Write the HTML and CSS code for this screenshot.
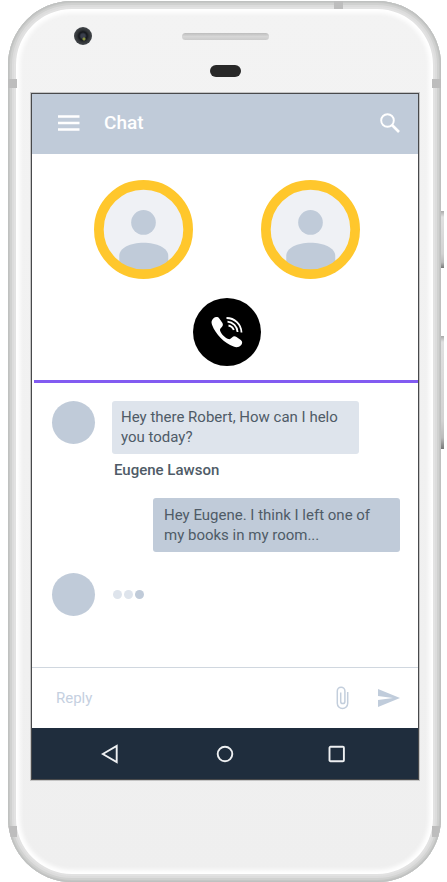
FILE: index.html
```html
<!DOCTYPE html>
<html lang="en">
<head>
<meta charset="utf-8">
<meta name="viewport" content="width=device-width, initial-scale=1">
<title>Chat</title>
<link rel="stylesheet" href="styles.css">
</head>
<body>
<div class="phone">
  <span class="side-key side-key-power"></span>
  <span class="side-key side-key-volume"></span>
  <div class="shell">
    <span class="band band-top"></span>
    <span class="band band-left-upper"></span>
    <span class="band band-right-upper"></span>
    <span class="band band-left-lower"></span>
    <span class="band band-right-lower"></span>
    <div class="forehead">
      <span class="camera"></span>
      <span class="speaker"></span>
      <span class="sensor"></span>
    </div>
    <div class="screen">
      <header class="app-bar">
        <button class="icon-button" aria-label="Menu">
          <svg width="22" height="16" viewBox="0 0 22 16"><path d="M0 1.5h21.500M0 8h21.500M0 14.5h21.500" stroke="#fff" stroke-width="2.4"/></svg>
        </button>
        <h1 class="title">Chat</h1>
        <button class="icon-button" aria-label="Search">
          <svg width="20" height="20" viewBox="0 0 20 20" fill="none" stroke="#fff"><circle cx="7.5" cy="7.5" r="6.3" stroke-width="1.9"/><path d="M12 12l7 7" stroke-width="2.6"/></svg>
        </button>
      </header>
      <section class="call">
        <div class="callers">
          <svg class="caller" viewBox="0 0 98 98" role="img" aria-label="Caller">
            <circle cx="49" cy="49" r="44" fill="#eff1f5"/>
            <circle cx="49" cy="42" r="12.2" fill="#c0cbd9"/>
            <path d="M25 92V75C25 67 36 62 49 62S73.500 67 73.500 75V92Z" fill="#c0cbd9"/>
            <circle cx="49" cy="49" r="44.200" fill="none" stroke="#ffc72c" stroke-width="9.600"/>
          </svg>
          <svg class="caller" viewBox="0 0 98 98" role="img" aria-label="Recipient">
            <circle cx="49" cy="49" r="44" fill="#eff1f5"/>
            <circle cx="49" cy="42" r="12.2" fill="#c0cbd9"/>
            <path d="M25 92V75C25 67 36 62 49 62S73.500 67 73.500 75V92Z" fill="#c0cbd9"/>
            <circle cx="49" cy="49" r="44.200" fill="none" stroke="#ffc72c" stroke-width="9.600"/>
          </svg>
        </div>
        <button class="call-button" aria-label="Call">
          <svg width="68" height="68" viewBox="0 0 68 68">
            <path d="M20.500 20.300C22.200 18.700 25 18.600 26.300 20.500L29.300 24.800C30.400 26.500 29.900 28 28.600 29.200C27.200 30.400 26.700 31.500 27.200 33C28.500 36.300 32 39.800 35.300 41C36.900 41.500 38 40.700 39 39.600C40.200 38.300 41.800 37.900 43.500 39L47.800 41.900C49.700 43.200 49.500 45.500 48 47.200C46.200 49.200 43.500 49.600 40.600 48.600C31.200 45.200 22.800 36.700 19 26.800C18 24.100 18.500 22.100 20.500 20.300Z" fill="#fff"/>
            <path d="M33.500 20A15 15 0 0 1 48.500 34.500M34.500 23.700A11 11 0 0 1 44.600 34M35.500 27.500A7 7 0 0 1 40.800 32" fill="none" stroke="#fff" stroke-width="1.800"/>
          </svg>
        </button>
      </section>
      <main class="messages">
        <div class="row">
          <span class="avatar"></span>
          <div class="incoming">
            <p class="bubble">Hey there Robert, How can I helo you today?</p>
            <p class="sender">Eugene Lawson</p>
          </div>
        </div>
        <p class="bubble bubble-own">Hey Eugene. I think I left one of my books in my room...</p>
        <div class="row row-typing">
          <span class="avatar"></span>
          <span class="typing"><i></i><i></i><i></i></span>
        </div>
      </main>
      <form class="composer">
        <input class="reply" type="text" placeholder="Reply" aria-label="Reply">
        <button class="icon-button" type="button" aria-label="Attach file">
          <svg width="14" height="24" viewBox="0 0 14 24" fill="none" stroke="#c3cedc" stroke-width="1.500"><path d="M11.700 6V17.300A5.200 5.200 0 0 1 1.300 17.300V5A3.800 3.800 0 0 1 8.900 5V15.500A2.100 2.100 0 0 1 4.700 15.500V6.500"/></svg>
        </button>
        <button class="icon-button" type="button" aria-label="Send">
          <svg width="22" height="18" viewBox="0 0 22 18"><path d="M0 0L22 9 0 18V11L15 9 0 7Z" fill="#c0ccdb"/></svg>
        </button>
      </form>
      <nav class="system-bar">
        <button class="icon-button" aria-label="Back">
          <svg width="20" height="20" viewBox="0 0 20 20"><path d="M1.800 10L15.700 2V18Z" fill="none" stroke="#eef0f2" stroke-width="1.900"/></svg>
        </button>
        <button class="icon-button" aria-label="Home">
          <svg width="18" height="18" viewBox="0 0 18 18"><circle cx="9" cy="9" r="7.300" fill="none" stroke="#eef0f2" stroke-width="1.900"/></svg>
        </button>
        <button class="icon-button" aria-label="Recent apps">
          <svg width="18" height="18" viewBox="0 0 18 18"><rect x="1.500" y="1.800" width="14.400" height="14.400" rx="1" fill="none" stroke="#eef0f2" stroke-width="1.900"/></svg>
        </button>
      </nav>
    </div>
  </div>
</div>
</body>
</html>
```
FILE: styles.css
```css
* {
  box-sizing: border-box;
}

body {
  margin: 0;
  min-height: 100vh;
  display: flex;
  padding: 1px 6px 0 8px;
  background: #fff;
  color: #4f5b67;
  font: 15px/20px Roboto, sans-serif;
}

h1,
p {
  margin: 0;
}

button {
  border: 0;
  padding: 0;
  background: none;
  cursor: pointer;
}

svg {
  display: block;
}

.phone {
  position: relative;
  flex: 1;
  display: flex;
}

.shell {
  position: relative;
  flex: 1;
  padding: 0 22px 102px 23px;
  border-radius: 64px;
  overflow: hidden;
  background: linear-gradient(#f3f3f3, #efefef);
  box-shadow:
    inset 0 0 0 1px #bfc1c0,
    inset 0 0 0 2px #c6c7c6,
    inset 0 0 0 4px #d0d1d0,
    inset 0 0 0 6px #dcdcdc,
    inset 0 0 0 8px #e2e2e2,
    inset 0 0 4px 12px #fff;
}

.side-key {
  position: absolute;
  right: -3px;
  width: 3px;
  background: linear-gradient(#aaa, #e0e0e0 6px, #d2d2d2 75%, #bbb 90%, #777);
}

.side-key-power {
  top: 210px;
  height: 57px;
}

.side-key-volume {
  top: 335px;
  height: 113px;
}

.band {
  position: absolute;
  width: 9px;
  height: 9px;
  background: #bdbdbd;
}

.band-top {
  top: 0;
  right: 98px;
  height: 8px;
}

.band-left-upper {
  top: 78px;
  left: 0;
}

.band-right-upper {
  top: 78px;
  right: 0;
}

.band-left-lower {
  bottom: 45px;
  left: 0;
  height: 11px;
}

.band-right-lower {
  bottom: 45px;
  right: 0;
  height: 11px;
}

.forehead {
  height: 92px;
  padding: 26px 42px 0 43px;
  display: grid;
  grid-template-columns: 1fr auto 1fr;
  grid-template-rows: 18px 12px;
  row-gap: 20px;
  align-items: center;
}

.camera {
  width: 18px;
  height: 18px;
  border-radius: 50%;
  background:
    radial-gradient(circle at 10px 12px, #8a9440 0 1px, transparent 2px),
    radial-gradient(circle, #3a3f4c 0 2px, #14171c 4px, #303336 6px, #42464a 9px);
}

.speaker {
  width: 87px;
  height: 7px;
  border-radius: 4px;
  background: linear-gradient(#bcbcbc, #d6d6d6 50%, #cbcbcb);
}

.sensor {
  grid-column: 2;
  justify-self: center;
  width: 31px;
  height: 12px;
  border-radius: 6px;
  background: #282828;
}

.screen {
  border: 1px solid #48494b;
  box-shadow: 0 0 0 1px #c4c4c4;
  background: #fff;
}

.app-bar {
  height: 60px;
  padding: 0 18px 2px 26px;
  display: flex;
  align-items: center;
  background: #c0cbd9;
}

.title {
  flex: 1;
  margin-left: 24px;
  color: #fff;
  font-size: 19px;
  line-height: 24px;
  font-weight: 500;
}

.call {
  margin-left: 2px;
  padding: 26px 0 14px 2px;
  border-bottom: 3px solid #825bf1;
}

.callers {
  display: flex;
  justify-content: center;
  gap: 68px;
}

.caller {
  width: 99px;
  height: 99px;
}

.call-button {
  display: block;
  width: 68px;
  margin: 19px auto 0;
  border-radius: 50%;
  background: #000;
}

.messages {
  padding: 18px 18px 51px 20px;
}

.row {
  display: flex;
  gap: 17px;
}

.avatar {
  width: 43px;
  height: 43px;
  border-radius: 50%;
  background: #c0cbd9;
}

.bubble {
  width: 247px;
  padding: 6px 9px 7px;
  border-radius: 3px;
  background: #dee4ec;
}

.bubble-own {
  margin: 18px 0 21px auto;
  padding: 7px 11px;
  background: #c0cbd9;
}

.sender {
  margin: 6px 2px 0;
  font-weight: 500;
}

.row-typing {
  align-items: center;
}

.typing {
  display: flex;
  gap: 2px;
  padding-left: 1px;
}

.typing i {
  width: 9px;
  height: 9px;
  border-radius: 50%;
  background: #dee4ec;
}

.typing i:last-child {
  background: #c0cbd9;
}

.composer {
  height: 61px;
  padding: 0 18px 0 24px;
  display: flex;
  align-items: center;
  gap: 28px;
  border-top: 1px solid #d0d7df;
}

.reply {
  flex: 1;
  min-width: 0;
  border: 0;
  padding: 0;
  outline: 0;
  background: none;
  font: inherit;
}

.reply::placeholder {
  color: #c5d0df;
  opacity: 1;
}

.system-bar {
  height: 51px;
  padding: 0 72px 0 69px;
  display: flex;
  align-items: center;
  justify-content: space-between;
  background: #1f2d3d;
}
```
